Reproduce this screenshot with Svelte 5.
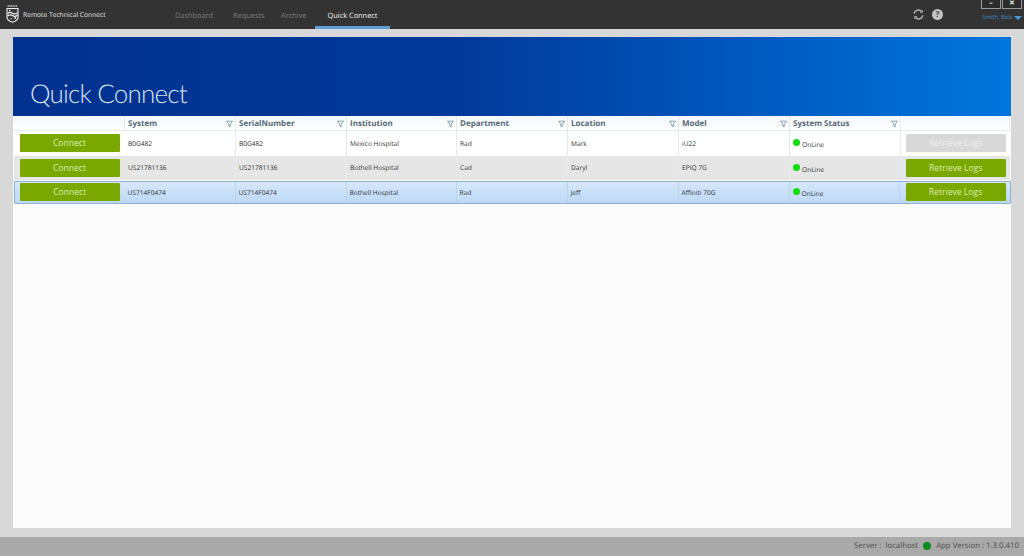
<script>
    const tabs = ["Dashboard", "Requests", "Archive", "Quick Connect"];
    const columns = ["System", "SerialNumber", "Institution", "Department", "Location", "Model", "System Status"];
    const rows = [
        { system: "B0G482", serial: "B0G482", institution: "Mexico Hospital", department: "Rad", location: "Mark", model: "iU22", logs: false, cls: "" },
        { system: "US21781136", serial: "US21781136", institution: "Bothell Hospital", department: "Cad", location: "Daryl", model: "EPIQ 7G", logs: true, cls: "alt" },
        { system: "US714F0474", serial: "US714F0474", institution: "Bothell Hospital", department: "Rad", location: "Jeff", model: "Affiniti 70G", logs: true, cls: "selected" },
    ];
</script>

<div class="app">
    <header class="topbar">
        <div class="brand">
            <svg class="logo" width="13" height="18" viewBox="0 0 13 18">
                <path d="M1.5 1 H11.5" stroke="#cfcfcf" stroke-width="1.4" stroke-dasharray="1.2 0.5" />
                <path d="M1 3.5 H12 V12.5 Q12 15.5 6.5 17.3 Q1 15.5 1 12.5 Z" fill="#3a3a3a" stroke="#f0f0f0" stroke-width="1.1" />
                <path d="M1.5 8.6 Q4 6.4 6.5 8.2 T11.5 7.6 M1.5 11 Q4 8.8 6.5 10.6 T11.5 10" fill="none" stroke="#f0f0f0" stroke-width="1.2" />
                <circle cx="3.8" cy="5.6" r="0.8" fill="#f0f0f0" />
                <circle cx="9.2" cy="13" r="0.9" fill="#f0f0f0" />
                <circle cx="5.2" cy="13.6" r="0.7" fill="#f0f0f0" />
            </svg>
            <span>Remote Technical Connect</span>
        </div>
        <nav class="tabs">
            {#each tabs as tab, i}
                <div class="tab" class:active={i === 3}>{tab}</div>
            {/each}
        </nav>
        <div class="tools">
            <svg width="11" height="11" viewBox="0 0 11 11" fill="none" stroke="#b4b4b4" stroke-width="1.4">
                <path d="M1 4.6 A4.5 4.5 0 0 1 8.6 2.4" />
                <path d="M10 6.4 A4.5 4.5 0 0 1 2.4 8.6" />
                <path d="M9.4 1 V3.4 H7 M1.6 10 V7.6 H4" stroke-width="0.9" />
            </svg>
            <div class="help">?</div>
        </div>
        <div class="window">
            <div class="controls">
                <div class="ctl">–</div>
                <div class="ctl">✕</div>
            </div>
            <div class="user">Smith, Bob <span class="caret"></span></div>
        </div>
    </header>

    <main class="content">
        <section class="card">
            <div class="banner"><h1>Quick Connect</h1></div>
            <div class="grid head">
                <div class="cell"></div>
                {#each columns as col}
                    <div class="cell th">
                        <span>{col}</span>
                        <svg width="7" height="8" viewBox="0 0 8 8" fill="none" stroke="#6f93a6" stroke-width="0.9">
                            <path d="M0.5 0.8 H7.5 L4.8 4 V7.4 L3.2 6.4 V4 Z" />
                        </svg>
                    </div>
                {/each}
                <div class="cell"></div>
            </div>
            {#each rows as row}
                <div class="grid row {row.cls}">
                    <div class="cell btn-cell"><button class="btn">Connect</button></div>
                    <div class="cell">{row.system}</div>
                    <div class="cell">{row.serial}</div>
                    <div class="cell">{row.institution}</div>
                    <div class="cell">{row.department}</div>
                    <div class="cell">{row.location}</div>
                    <div class="cell">{row.model}</div>
                    <div class="cell status"><span class="dot"></span><span class="online">OnLine</span></div>
                    <div class="cell btn-cell last">
                        <button class="btn" class:disabled={!row.logs}>Retrieve Logs</button>
                    </div>
                </div>
            {/each}
        </section>
    </main>

    <footer class="statusbar">
        <span>Server :&nbsp; localhost</span>
        <span class="server-dot"></span>
        <span>App Version : 1.3.0.410</span>
    </footer>
</div>

<style>
    :global(body) {
        margin: 0;
        background: #d8d8d8;
    }

    .app {
        display: flex;
        flex-direction: column;
        height: 556px;
        width: 1024px;
        overflow: hidden;
        font-family: "Open Sans", "Noto Sans", sans-serif;
        text-rendering: geometricPrecision;
    }

    .topbar {
        display: flex;
        height: 29px;
        flex: none;
        background: #333333;
        color: #e8e8e8;
    }

    .brand {
        display: flex;
        align-items: center;
        gap: 4px;
        width: 175px;
        padding: 0 0 0 6px;
        box-sizing: border-box;
        font-size: 6.7px;
        color: #e4e4e4;
    }

    .logo {
        margin-top: -2px;
    }

    .tabs {
        display: flex;
        flex: 1;
    }

    .tab {
        width: 58px;
        font-size: 7.4px;
        line-height: 33px;
        color: #7d7d7d;
        box-sizing: border-box;
        height: 29px;
    }

    .tab:nth-child(2) {
        width: 48px;
    }

    .tab:nth-child(3) {
        width: 34px;
    }

    .tab.active {
        width: 75px;
        text-align: center;
        color: #f2f2f2;
        border-bottom: 3px solid #5b9fd6;
    }

    .tools {
        display: flex;
        align-items: center;
        gap: 8px;
        margin-right: 38px;
        padding-bottom: 1px;
    }

    .help {
        width: 11px;
        height: 11px;
        border-radius: 50%;
        background: #c4c4c4;
        color: #444;
        font-size: 8px;
        font-weight: 700;
        line-height: 11px;
        text-align: center;
    }

    .window {
        width: 41px;
        margin-right: 2px;
        display: flex;
        flex-direction: column;
        align-items: flex-end;
    }

    .controls {
        display: flex;
        gap: 1px;
    }

    .ctl {
        width: 20px;
        height: 9px;
        border: 1px solid #9a9a9a;
        border-top: none;
        box-sizing: border-box;
        background: #2c2c2c;
        color: #e8e8e8;
        font-size: 7px;
        font-weight: 700;
        line-height: 8px;
        text-align: center;
    }

    .user {
        margin-top: 4px;
        display: flex;
        align-items: center;
        gap: 2px;
        font-size: 5.9px;
        color: #4388c2;
        white-space: nowrap;
    }

    .caret {
        width: 0;
        height: 0;
        margin-top: 2px;
        border: 4px solid transparent;
        border-top: 4px solid #4f97d2;
        border-bottom: none;
    }

    .content {
        flex: 1;
        padding: 8px 13px 9px;
        min-height: 0;
    }

    .card {
        height: 100%;
        background: #fbfbfb;
    }

    .banner {
        height: 79px;
        box-sizing: border-box;
        background: linear-gradient(90deg, #02318f 0%, #023a9a 45%, #0057bd 72%, #0076dc 100%);
        padding: 38px 0 0 17px;
    }

    h1 {
        margin: 0;
        font-family: "Lato", "Open Sans", sans-serif;
        font-size: 26px;
        line-height: 36px;
        font-weight: 300;
        letter-spacing: -0.8px;
        color: #d4e3f3;
    }

    .grid {
        display: grid;
        grid-template-columns: 111px 111px 111px 110px 111px 111px 111px 110.5px 1fr;
        margin: 0 1px;
    }

    .head {
        height: 15px;
        box-sizing: border-box;
        background: linear-gradient(#f2f7fc, #ffffff);
        border-bottom: 1px solid #e6eef5;
    }

    .cell {
        display: flex;
        align-items: center;
        padding-left: 3px;
        box-sizing: border-box;
        font-size: 6.6px;
        color: #333;
        border-right: 1px solid #e4eaee;
        white-space: nowrap;
    }

    .th {
        justify-content: space-between;
        padding-top: 1px;
        padding-right: 2px;
        font-size: 8px;
        font-weight: 700;
        color: #566a78;
    }

    .row {
        height: 24.5px;
        background: #ffffff;
    }

    .row.alt {
        background: #e6e6e6;
    }

    .row.selected {
        height: 22.5px;
        box-sizing: border-box;
        margin: 1px 0 0 1px;
        grid-template-columns: 109.5px 111px 111px 110px 111px 111px 111px 110.5px 1fr;
        background: linear-gradient(#d6e7fa, #bcd8f6);
        border: 1px solid #8fb0d0;
        border-radius: 1px;
    }

    .row.selected .cell {
        border-right-color: #bfd3e8;
    }

    .btn-cell {
        padding: 0;
        justify-content: center;
        border-right: none;
    }

    .btn-cell.last {
        padding-left: 1px;
    }

    .btn {
        width: 100px;
        height: 18px;
        padding: 0;
        border: none;
        border-radius: 1px;
        background: #7aa800;
        color: #dcebb4;
        font-family: inherit;
        font-size: 8.6px;
        line-height: 18px;
    }

    .btn.disabled {
        background: #d8d8d8;
        color: #f1f1f1;
    }

    .status {
        gap: 2px;
    }

    .dot {
        width: 7px;
        height: 7px;
        margin-top: -1px;
        border-radius: 50%;
        background: #12dc12;
    }

    .online {
        padding-top: 3px;
    }

    .statusbar {
        display: flex;
        flex: none;
        align-items: center;
        justify-content: flex-end;
        gap: 5px;
        height: 19px;
        box-sizing: border-box;
        padding: 0 5px 2px 0;
        background: #a9a9a9;
        font-size: 7.8px;
        color: #4c4c4c;
    }

    .server-dot {
        width: 8px;
        height: 8px;
        margin-top: 1px;
        border-radius: 50%;
        background: #0f8a1e;
    }
</style>
